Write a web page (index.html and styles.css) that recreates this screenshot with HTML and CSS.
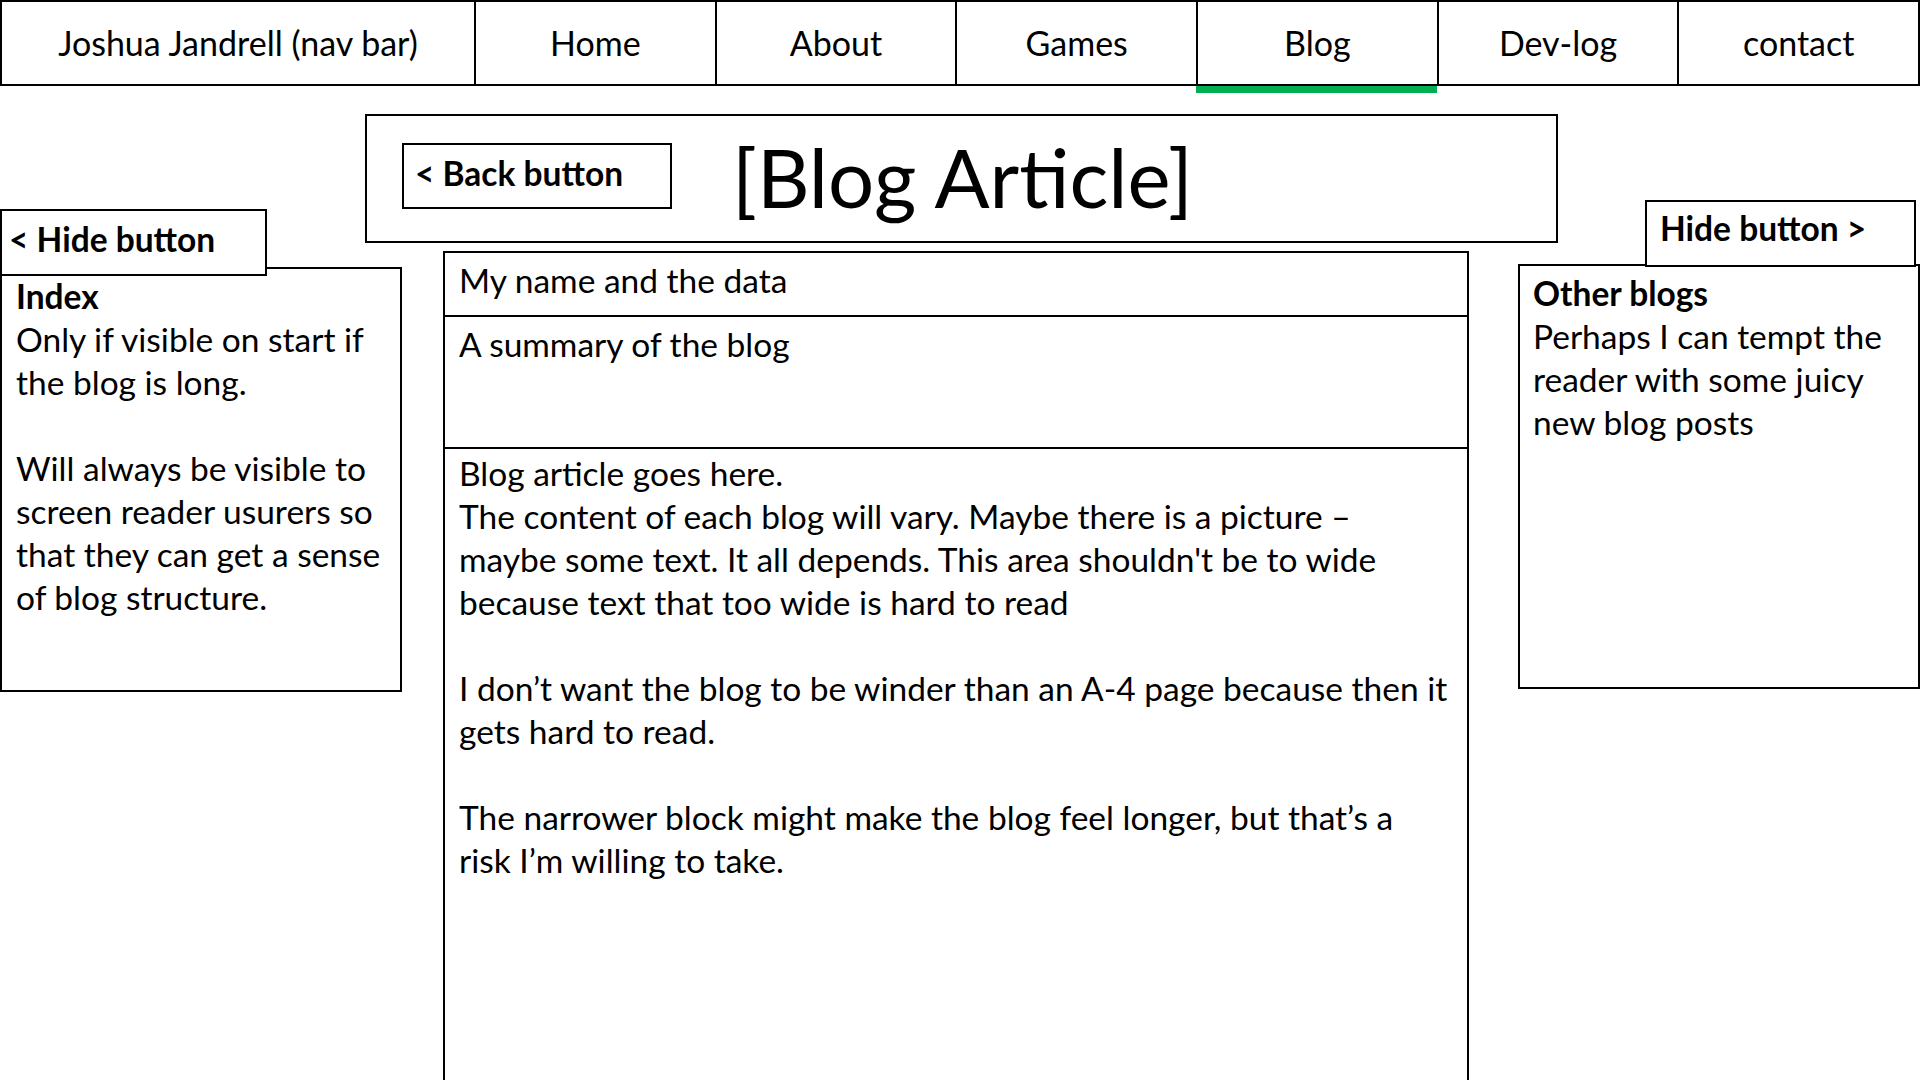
FILE: index.html
```html
<!DOCTYPE html>
<html lang="en">
<head>
<meta charset="utf-8">
<title>Blog Article wireframe</title>
<link rel="stylesheet" href="styles.css">
</head>
<body>
<nav class="nav">
  <div class="nav-item nav-brand">Joshua Jandrell (nav bar)</div>
  <div class="nav-item">Home</div>
  <div class="nav-item">About</div>
  <div class="nav-item">Games</div>
  <div class="nav-item nav-active">Blog</div>
  <div class="nav-item">Dev-log</div>
  <div class="nav-item">contact</div>
</nav>
<div class="page">
  <aside class="side side-left">
    <div class="hide-btn hide-left">&lt; Hide button</div>
    <div class="panel panel-left">
      <p class="panel-title">Index</p>
      <p class="para">Only if visible on start if<br>the blog is long.</p>
      <p class="para">Will always be visible to<br>screen reader usurers so<br>that they can get a sense<br>of blog structure.</p>
    </div>
  </aside>
  <main class="center">
    <header class="article-head">
      <div class="back-btn">&lt; Back button</div>
      <h1 class="title">[Blog Article]</h1>
    </header>
    <section class="article">
      <div class="row row-meta">My name and the data</div>
      <div class="row row-summary">A summary of the blog</div>
      <div class="row row-body">
        <p class="para">Blog article goes here.<br>The content of each blog will vary. Maybe there is a picture –<br>maybe some text. It all depends. This area shouldn't be to wide<br>because text that too wide is hard to read</p>
        <p class="para">I don’t want the blog to be winder than an A-4 page because then it<br>gets hard to read.</p>
        <p class="para">The narrower block might make the blog feel longer, but that’s a<br>risk I’m willing to take.</p>
      </div>
    </section>
  </main>
  <aside class="side side-right">
    <div class="hide-btn hide-right">Hide button &gt;</div>
    <div class="panel panel-right">
      <p class="panel-title">Other blogs</p>
      <p class="para">Perhaps I can tempt the<br>reader with some juicy<br>new blog posts</p>
    </div>
  </aside>
</div>
</body>
</html>
```
FILE: styles.css
```css
* { box-sizing: border-box; }
html, body { margin: 0; padding: 0; }
body {
  width: 1920px;
  height: 1080px;
  overflow: hidden;
  background: #fff;
  color: #000;
  font-family: Lato, "Open Sans", sans-serif;
  font-size: 33.5px;
  line-height: 43px;
}
p { margin: 0; }

.nav {
  display: flex;
  height: 86px;
  border-right: 2px solid #000;
}
.nav-item {
  flex: 1;
  display: flex;
  align-items: center;
  justify-content: center;
  padding-bottom: 1px;
  border-top: 2px solid #000;
  border-bottom: 2px solid #000;
  border-left: 2px solid #000;
  font-size: 34px;
  white-space: nowrap;
}
.nav-brand { flex: 0 0 474px; }
.nav-active { box-shadow: 0 7px 0 #00b050; }

.page {
  display: grid;
  grid-template-columns: 402px 1fr 402px;
  align-items: start;
}

.side { display: flex; flex-direction: column; }
.side-left { padding-top: 123px; }
.side-right { padding-top: 114px; }

.hide-btn {
  position: relative;
  z-index: 1;
  height: 67px;
  border: 2px solid #000;
  background: #fff;
  font-weight: 700;
  white-space: nowrap;
}
.hide-left {
  width: 267px;
  margin-bottom: -9px;
  padding: 7px 0 0 7px;
}
.hide-right {
  width: 271px;
  align-self: flex-end;
  margin-right: 4px;
  margin-bottom: -3px;
  padding: 5px 0 0 13px;
}

.panel {
  height: 425px;
  border: 2px solid #000;
  background: #fff;
  white-space: nowrap;
}
.panel-left { padding: 6px 0 0 14px; }
.panel-right { padding: 6px 0 0 13px; }
.panel-title { font-weight: 700; }
.para + .para { margin-top: 43px; }

.center { padding-top: 28px; }
.article-head {
  display: flex;
  align-items: flex-start;
  height: 129px;
  margin: 0 -40px 0 -37px;
  border: 2px solid #000;
  padding-left: 35px;
}
.back-btn {
  margin-top: 27px;
  width: 270px;
  height: 66px;
  border: 2px solid #000;
  display: flex;
  align-items: center;
  padding: 0 0 5px 11px;
  font-weight: 700;
  white-space: nowrap;
}
.title {
  margin: 20px 0 0 60px;
  font-size: 81.5px;
  line-height: 81.5px;
  font-weight: 400;
  white-space: nowrap;
}

.article {
  margin: 8px 49px 0 41px;
  border: 2px solid #000;
  border-bottom: 0;
}
.row {
  border-bottom: 2px solid #000;
  padding-left: 14px;
  white-space: nowrap;
}
.row-meta { height: 64px; padding-top: 6px; }
.row-summary { height: 132px; padding-top: 6px; }
.row-body { height: 700px; padding-top: 3px; border-bottom: 0; }
```
